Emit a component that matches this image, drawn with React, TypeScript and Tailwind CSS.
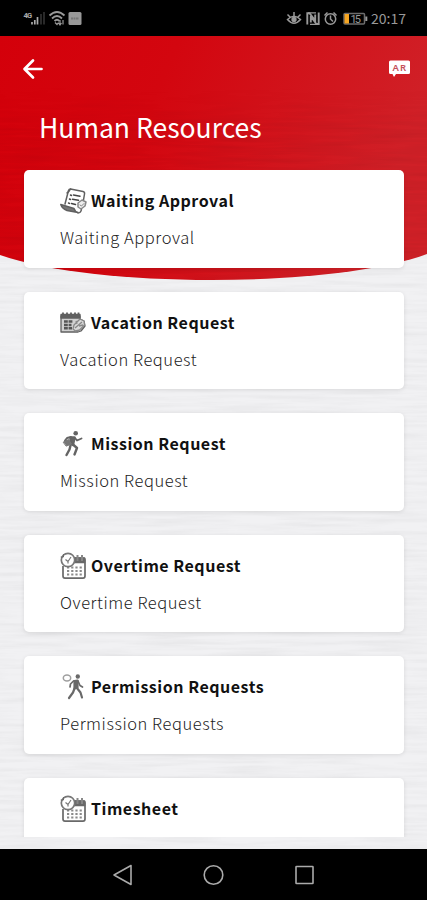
import React from "react";

const ink = "#606060";

function ApprovalIcon() {
  return (
    <svg width="28" height="28" viewBox="0 0 28 28" fill="none" stroke={ink} strokeWidth="1.500" strokeLinejoin="round" strokeLinecap="round">
      <path d="M5 17 8.500 3.500Q9 2 10.500 2L23 4.500Q25 5 24.500 7L23.500 13" />
      <path d="M10.500 2Q9 5 7 6" />
      <path d="M.8 17.500 14 21.500Q15 25 18 25.500L7 23.500Q2 21.500 .8 17.500Z" fill="#777" />
      <path d="M18 26Q21 26 21.500 22" />
      <path d="M10.500 8l1 .5M13.500 8l6.500 1.200M9.500 12l1 .5M12.500 12.300l6 1M8.500 16l1 .4M11.500 16.500l4 1" stroke="#444" />
      <path d="M18 16 22 13l4 2-1 4-4 3-3-2Z" fill="#eee" stroke="#888" />
      <path d="m20 18 1.500 1L24 16.500" stroke="#888" strokeWidth="1" />
    </svg>
  );
}

function VacationIcon() {
  return (
    <svg width="28" height="28" viewBox="0 0 28 28" fill="none" stroke={ink} strokeWidth="1.300" strokeLinejoin="round">
      <path d="M1 7H20V10L24 12 25 17 21 22 18 23H1Z" fill="#d0d0d0" />
      <path d="M1 5.500H20V9H1Z" fill={ink} />
      <path d="M3 3.500V7M7 3.500V7M11 3.500V7M15 3.500V7M18.500 3.500V7" strokeWidth="1.800" />
      <path d="M4 12.500H12.500M4 16H11.500M4 19.200H12" stroke="#555" strokeWidth="2.400" strokeDasharray="3.800 .8" />
      <path d="m13 20 1-4 6-6 4 2 .5 4-5 5-4 1Z" fill="#d9d9d9" stroke="#888" />
      <path d="m15 19 7-6M17 15l-1-3M19 17l4-1" stroke="#888" />
    </svg>
  );
}

function MissionIcon() {
  return (
    <svg width="28" height="28" viewBox="0 0 28 28" fill="none" stroke="#646464" strokeWidth="2.400" strokeLinejoin="round" strokeLinecap="round">
      <circle cx="15.700" cy="3.300" r="2.300" fill="#646464" stroke="none" />
      <path d="M10.500 7.500 14.500 7.500 13 15 10.500 14Z" fill="#646464" />
      <path d="m15 8 2 2.500 4.500-2M11 7 7 8 5 10.500" strokeWidth="1.900" />
      <path d="m13 14.500 4 3.500-2.500 6.500M10.500 15.500 9.500 19.500 6.500 25" />
      <path d="m3.500 12 5-2.500 3 4.500-5 2Z" fill="#777" stroke="#777" strokeWidth="1" />
    </svg>
  );
}

function CalendarClockIcon() {
  return (
    <svg width="28" height="28" viewBox="0 0 28 28" fill="none" stroke="#696969" strokeWidth="1.700" strokeLinejoin="round">
      <path d="M14 6H23Q25 6 25 8V24Q25 26.200 23 26.200H5Q3 26.200 3 24V14" />
      <path d="M15 6H24.500V10.500H15Z" fill="#696969" />
      <path d="M17.500 3V9M22 3V9" stroke="#888" strokeWidth="2" />
      <path d="M7 15.500H22.500M7 19H22.500M7 22.500H22.500" stroke="#8a8a8a" strokeWidth="1.900" strokeDasharray="2.200 2" />
      <circle cx="8" cy="8" r="6.700" fill="#fff" stroke="#777" />
      <path d="M5.500 7.500 8 9.500 11 5M8 9V11.500" stroke="#777" strokeWidth="1.200" />
      <path d="M.7 5H3.500V2" strokeWidth="1" />
    </svg>
  );
}

function PermissionIcon() {
  return (
    <svg width="28" height="28" viewBox="0 0 28 28" fill="none" stroke="#696969" strokeWidth="2.200" strokeLinejoin="round" strokeLinecap="round">
      <ellipse cx="7" cy="5" rx="3.700" ry="3" stroke="#a0a0a0" strokeWidth="1.500" />
      <circle cx="17.800" cy="3.500" r="2.200" fill="#696969" stroke="none" />
      <path d="M14.500 8 17.500 7.500 17.500 14.500 14.500 15.500Z" fill="#696969" />
      <path d="m13.500 8-3 3-.5 3M18 8l2 4.500 2.500 1.500" strokeWidth="1.700" />
      <path d="M14.500 15.500 13 19.500 9 25M16.500 14.500l4 5 1.500 5" />
    </svg>
  );
}

type Item = { title: string; subtitle?: string; icon: React.ReactNode };

const items: Item[] = [
  { title: "Waiting Approval", subtitle: "Waiting Approval", icon: <ApprovalIcon /> },
  { title: "Vacation Request", subtitle: "Vacation Request", icon: <VacationIcon /> },
  { title: "Mission Request", subtitle: "Mission Request", icon: <MissionIcon /> },
  { title: "Overtime Request", subtitle: "Overtime Request", icon: <CalendarClockIcon /> },
  { title: "Permission Requests", subtitle: "Permission Requests", icon: <PermissionIcon /> },
  { title: "Timesheet", icon: <CalendarClockIcon /> },
];

function StatusBar() {
  return (
    <div className="flex h-9 shrink-0 items-center justify-between bg-black pr-[20px] pl-[23px]">
      <svg width="60" height="20" viewBox="23 8 60 20" fill="none">
        <text x="23.500" y="17.500" fill="#aaa" fontSize="7.500" fontWeight="700" fontFamily="Roboto, sans-serif" textLength="8.500">4G</text>
        <path d="M32 22V24.500M34.800 20V24.500M37.500 17V24.500" stroke="#aaa" strokeWidth="1.700" />
        <path d="M41 14V24.500M44 12V24.500" stroke="#292929" strokeWidth="2" />
        <path d="M49.500 15.500Q57 8.500 64.500 15.500M52 18.500Q57 13.500 62 18.500M54.500 21Q57 18.500 59.500 21" stroke="#999" strokeWidth="1.800" />
        <path d="m55 22.500 2 2 1.500-2M60 20v4.500M63 20v4.500M58.500 23l1.500 2 1.500-2" stroke="#999" strokeWidth="1.200" />
        <rect x="68.500" y="12" width="13" height="13" rx="1.500" fill="#999" />
        <path d="M71 18.500H79" stroke="#777" strokeWidth="2" strokeDasharray="2 .5" />
      </svg>
      <div className="flex items-center">
        <svg width="84" height="20" viewBox="285 8 84 20" fill="none" stroke="#999" strokeWidth="1.500">
          <path d="M287.500 19.500Q294 13 300.500 19.500Q294 27 287.500 19.500ZM287.500 14.500l2.500 2.500M294 12v4M300.500 14.500l-2.500 2.500" />
          <circle cx="294" cy="19.500" r="1.900" fill="#999" />
          <path d="M307.300 24.500V13.200H309.500L315.200 20.500V14.500M318.700 12.500V24H316.500L310.800 16.500V22.500" strokeWidth="1.900" />
          <path d="M308 12.800H316M310 24.300H318" strokeWidth="1.200" />
          <circle cx="330.500" cy="19" r="5.200" />
          <path d="M330.500 15.500V19L333 21.500M324.500 15.500 327.500 12.500M333.500 12.500 336.500 15.500" />
          <rect x="344" y="13.500" width="20.500" height="10.500" rx="1" stroke="#6c6c6c" />
          <rect x="344.500" y="14" width="4.500" height="9.500" fill="#f6a623" stroke="none" />
          <path d="M366.300 16.500V21" strokeWidth="2" />
          <text x="350.500" y="22.700" fill="#999" stroke="none" fontSize="11" fontFamily="Roboto, sans-serif" textLength="10.500">15</text>
        </svg>
        <span className="ml-0.5 w-9 font-['Noto_Sans_CJK_JP','Noto_Sans',sans-serif] text-[14px] leading-none text-[#999]">20:17</span>
      </div>
    </div>
  );
}

function Backdrop() {
  return (
    <svg className="absolute inset-0" width="427" height="813" viewBox="0 36 427 813">
      <defs>
        <linearGradient id="red" x1="0" y1="0" x2="1" y2="0.25">
          <stop offset="0" stopColor="#d4000a" />
          <stop offset="0.4" stopColor="#d3060f" />
          <stop offset="1" stopColor="#d02027" />
        </linearGradient>
        <linearGradient id="fade" x1="0" y1="0" x2="0" y2="1">
          <stop offset="0.2" stopColor="#000" />
          <stop offset="0.4" stopColor="#fff" />
        </linearGradient>
        <mask id="lower"><rect y="36" width="427" height="250" fill="url(#fade)" /></mask>
        <clipPath id="curve"><path d="M0 36H427V254C332 288.500 95 288.500 0 255Z" /></clipPath>
        <filter id="grain" x="0" y="0" width="100%" height="100%">
          <feTurbulence type="fractalNoise" baseFrequency="0.014 0.22" numOctaves="3" seed="4" />
          <feColorMatrix values="0 0 0 0 0  0 0 0 0 0  0 0 0 0 0  0.36 0 0 0 -0.12" />
        </filter>
      </defs>
      <rect y="36" width="427" height="813" fill="#f1f1f3" />
      <rect y="36" width="427" height="813" filter="url(#grain)" opacity="0.18" />
      <path d="M0 36H427V254C332 288.500 95 288.500 0 255Z" fill="url(#red)" />
      <g clipPath="url(#curve)"><g mask="url(#lower)"><rect y="36" width="427" height="250" filter="url(#grain)" opacity="0.28" /></g></g>
    </svg>
  );
}

function Card({ item }: { item: Item }) {
  return (
    <article className="h-[97.500px] w-full shrink-0 rounded-[5px] bg-white pt-[17px] pl-9 shadow-[0_1px_4px_rgba(0,0,0,0.1)]">
      <div className="flex h-7 items-center gap-[3px]">
        <span className="shrink-0">{item.icon}</span>
        <h2 className="-mt-0.5 text-[16px] leading-7 font-bold tracking-[0.520px] whitespace-nowrap text-[#111]">{item.title}</h2>
      </div>
      {item.subtitle && (
        <p className="mt-2 text-[16.500px] leading-7 font-light tracking-[0.560px] whitespace-nowrap text-[#222]">{item.subtitle}</p>
      )}
    </article>
  );
}

export default function App() {
  return (
    <div className="flex h-[900px] w-[427px] flex-col overflow-hidden bg-black font-['Noto_Sans_CJK_JP','Noto_Sans',sans-serif]">
      <StatusBar />
      <main className="relative h-[813px] shrink-0 overflow-hidden">
        <Backdrop />
        <div className="relative flex h-full flex-col">
          <header className="h-[134px] shrink-0">
            <div className="flex h-[66px] items-center justify-between pr-4 pl-[22px]">
              <button aria-label="Back">
                <svg width="22" height="22" viewBox="0 0 22 22" fill="none" stroke="#fff" strokeWidth="2.700" strokeLinecap="round" strokeLinejoin="round">
                  <path d="M19.500 11H3M11 2.500 2.500 11 11 19.500" />
                </svg>
              </button>
              <button aria-label="Change language">
                <svg width="24" height="20" viewBox="0 0 24 20">
                  <path d="M3.500 1.500H21.500Q23 1.500 23 3V13.500Q23 15 21.500 15H9L7 18 5.500 15H3.500Q2 15 2 13.500V3Q2 1.500 3.500 1.500Z" fill="#fff" />
                  <text x="5.500" y="11.700" fill="#c4505a" fontSize="9.500" fontWeight="600" fontFamily="Noto Sans, sans-serif" textLength="13.500">AR</text>
                </svg>
              </button>
            </div>
            <h1 className="pl-[39px] text-[26.500px] leading-[49px] font-normal text-white">Human Resources</h1>
          </header>
          <section className="flex h-[667px] shrink-0 flex-col gap-6 overflow-hidden pr-[23px] pl-6">
            {items.map((item) => <Card key={item.title} item={item} />)}
          </section>
        </div>
      </main>
      <nav className="flex h-[51px] shrink-0 items-center justify-center gap-[70px] bg-black">
        <svg width="21" height="22" viewBox="0 0 21 22" fill="none" stroke="#aaa" strokeWidth="1.600"><path d="M19 1.500V20.500L2 11Z" strokeLinejoin="round" /></svg>
        <svg width="21" height="22" viewBox="0 0 21 22" fill="none" stroke="#aaa" strokeWidth="1.600"><circle cx="10.500" cy="11" r="9.300" /></svg>
        <svg width="21" height="22" viewBox="0 0 21 22" fill="none" stroke="#aaa" strokeWidth="1.600"><rect x="2" y="2.500" width="17" height="17" rx=".5" /></svg>
      </nav>
    </div>
  );
}
